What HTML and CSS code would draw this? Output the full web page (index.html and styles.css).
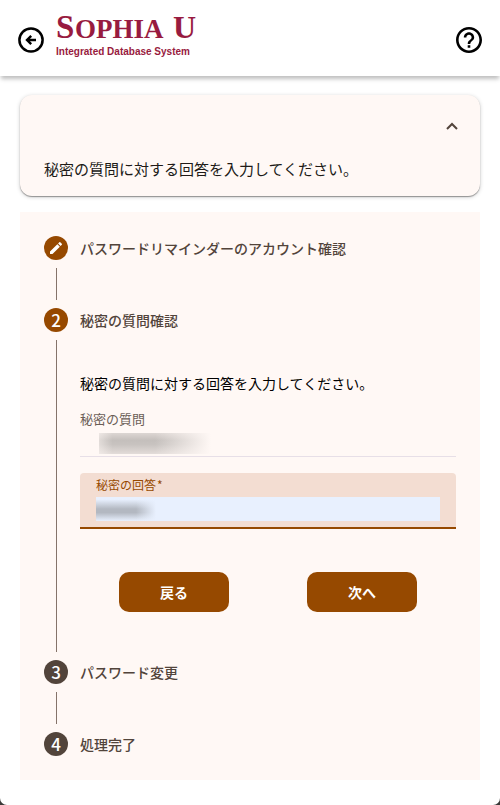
FILE: index.html
```
<!DOCTYPE html>
<html lang="ja">
<head>
<meta charset="UTF-8" />
<meta name="viewport" content="width=device-width, initial-scale=1" />
<title>パスワードリマインダー</title>
<link rel="stylesheet" href="styles.css">
</head>
<body>
  <header class="app-bar">
    <button class="icon-btn" type="button" aria-label="戻る">
      <svg viewBox="0 0 26 26" width="26" height="26" fill="none" stroke="currentColor">
        <circle cx="13" cy="13" r="11.6" stroke-width="2.5"/>
        <path d="M18 13H9.500M13.200 8.800L9 13l4.200 4.200" stroke-width="2.400"/>
      </svg>
    </button>
    <svg class="logo" viewBox="0 0 150 60" width="150" height="60" role="img" aria-label="Sophia U Integrated Database System">
      <g class="logo-name">
        <text x="0" y="34" font-size="33">S</text>
        <text x="19" y="34" font-size="27">OPHIA</text>
        <text x="117" y="34" font-size="32">U</text>
      </g>
      <text class="logo-sub" x="0" y="51">Integrated Database System</text>
    </svg>
    <button class="icon-btn help" type="button" aria-label="ヘルプ">
      <svg viewBox="2 2 20 20" width="26" height="26" fill="currentColor">
        <path d="M11 18h2v-2h-2v2zm1-16C6.480 2 2 6.480 2 12s4.480 10 10 10 10-4.480 10-10S17.520 2 12 2zm0 18c-4.410 0-8-3.590-8-8s3.590-8 8-8 8 3.590 8 8-3.590 8-8 8zm0-14c-2.210 0-4 1.790-4 4h2c0-1.100.9-2 2-2s2 .9 2 2c0 2-3 1.750-3 5h2c0-2.250 3-2.500 3-5 0-2.210-1.790-4-4-4z"/>
      </svg>
    </button>
  </header>

  <main>
    <section class="panel">
      <button class="panel-toggle" type="button" aria-expanded="true" aria-label="説明を閉じる">
        <svg viewBox="0 0 12 8" width="12" height="8" fill="none" stroke="currentColor" stroke-width="2">
          <path d="M1 7l5-5 5 5"/>
        </svg>
      </button>
      <p class="panel-text">秘密の質問に対する回答を入力してください。</p>
    </section>

    <ol class="stepper">
      <li class="step done">
        <div class="rail">
          <span class="badge">
            <svg viewBox="0 0 24 24" width="16" height="16" fill="currentColor">
              <path d="M3 17.250V21h3.750L17.810 9.940l-3.750-3.750L3 17.250zM20.710 7.040a1 1 0 0 0 0-1.410l-2.340-2.340a1 1 0 0 0-1.410 0l-1.830 1.830 3.750 3.750 1.830-1.830z"/>
            </svg>
          </span>
        </div>
        <h2 class="step-title">パスワードリマインダーのアカウント確認</h2>
      </li>

      <li class="step active">
        <div class="rail"><span class="badge">2</span></div>
        <div class="step-main">
          <h2 class="step-title">秘密の質問確認</h2>
          <form class="step-form">
            <p class="lead">秘密の質問に対する回答を入力してください。</p>
            <div class="question">
              <div class="question-label">秘密の質問</div>
              <div class="question-value"><span class="mask"></span></div>
            </div>
            <div class="field">
              <label for="answer">秘密の回答<span class="required">*</span></label>
              <input id="answer" type="text" required>
            </div>
            <div class="actions">
              <button class="btn" type="button">戻る</button>
              <button class="btn" type="submit">次へ</button>
            </div>
          </form>
        </div>
      </li>

      <li class="step">
        <div class="rail"><span class="badge">3</span></div>
        <h2 class="step-title">パスワード変更</h2>
      </li>

      <li class="step">
        <div class="rail"><span class="badge">4</span></div>
        <h2 class="step-title">処理完了</h2>
      </li>
    </ol>
  </main>
</body>
</html>
```

FILE: styles.css
```
* {
  margin: 0;
  padding: 0;
  box-sizing: border-box;
}

html {
  background: #3a3a38;
}

body {
  min-height: 100vh;
  background: #fff;
  border-radius: 0 0 7px 7px;
  color: #201a17;
  font-family: "Noto Sans CJK JP", "Noto Sans", sans-serif;
  font-size: 14px;
}

button,
input {
  font-family: inherit;
}

/* header */
.app-bar {
  display: flex;
  align-items: center;
  height: 76px;
  padding: 4px 18px 0;
  background: #fff;
  box-shadow: 0 4px 4px -1px rgba(0, 0, 0, 0.25);
}

.icon-btn {
  display: flex;
  border: none;
  background: none;
  color: #000;
  cursor: pointer;
}

.help {
  margin-left: auto;
}

.logo {
  margin: 0 0 12px 12px;
}

.logo-name {
  font-family: "Liberation Serif", serif;
  font-weight: bold;
  fill: #981b40;
}

.logo-sub {
  font-family: "Liberation Sans", sans-serif;
  font-size: 10px;
  font-weight: bold;
  fill: #981b40;
}

main {
  display: flex;
  flex-direction: column;
  gap: 16px;
  padding: 19px 20px 24px;
}

/* message panel */
.panel {
  padding-bottom: 16px;
  background: #fff8f5;
  border-radius: 12px;
  box-shadow:
    0 1px 1px rgba(0, 0, 0, 0.35),
    0 1px 4px rgba(0, 0, 0, 0.2);
}

.panel-toggle {
  display: flex;
  align-items: center;
  justify-content: flex-end;
  width: 100%;
  height: 61px;
  padding: 0 22px;
  border: none;
  background: none;
  color: #52443b;
  cursor: pointer;
}

.panel-text {
  padding: 2px 24px 0;
  font-size: 15px;
  line-height: 22px;
}

/* vertical stepper */
.stepper {
  padding: 24px;
  background: #fff8f5;
  list-style: none;
}

.step {
  display: grid;
  grid-template-columns: 24px 1fr;
  column-gap: 12px;
  min-height: 72px;
}

.step:last-child {
  min-height: 24px;
}

.rail {
  display: flex;
  flex-direction: column;
  align-items: center;
}

.rail::after {
  content: "";
  flex: 1;
  width: 1px;
  margin: 8px 0;
  background: #85736a;
}

.step:last-child .rail::after {
  display: none;
}

.badge {
  display: flex;
  align-items: center;
  justify-content: center;
  width: 24px;
  height: 24px;
  border-radius: 50%;
  background: #52443b;
  color: #fff;
  font-size: 17px;
  font-weight: 500;
  line-height: 24px;
}

.done .badge,
.active .badge {
  background: #964900;
}

.step-title {
  color: #52443b;
  font-size: 14px;
  font-weight: 500;
  line-height: 24px;
}

.step-form {
  padding: 40px 0 48px;
}

.lead {
  margin-bottom: 16px;
  color: #000;
  line-height: 22px;
}

.question {
  margin-bottom: 16px;
  border-bottom: 1px solid #e7dfe7;
}

.question-label {
  color: #6b5d55;
  font-size: 13px;
  line-height: 18px;
}

.question-value {
  padding: 5px 19px 2px;
}

.mask {
  display: block;
  width: 112px;
  height: 21px;
  background:
    linear-gradient(to right, rgba(255, 248, 245, 0.5), transparent 12%, transparent 50%, #fff8f5),
    linear-gradient(#ddd6d3, #c4bfbc 35%, #c8c3c0 55%, #e3dcd9);
}

.field {
  padding: 4px 16px 6px;
  background: #f3ddd2;
  border-bottom: 2px solid #964900;
  border-radius: 4px 4px 0 0;
}

.field label {
  display: block;
  margin-bottom: 4px;
  color: #964900;
  font-size: 12px;
  line-height: 16px;
}

.required {
  margin-left: 1px;
}

.field input {
  display: block;
  width: 100%;
  height: 24px;
  border: none;
  outline: none;
  background:
    linear-gradient(to right, transparent 40px, #e8f0fe 60px),
    linear-gradient(#e8f0fe 10%, #b3b8c1 50%, #b3b8c1 65%, #e8f0fe);
  font-size: 14px;
}

.actions {
  display: grid;
  grid-template-columns: 1fr 1fr;
  justify-items: center;
  margin-top: 43px;
}

.btn {
  width: 110px;
  height: 40px;
  border: none;
  border-radius: 10px;
  background: #964900;
  color: #fff;
  font-size: 14px;
  font-weight: 700;
  cursor: pointer;
}
```
